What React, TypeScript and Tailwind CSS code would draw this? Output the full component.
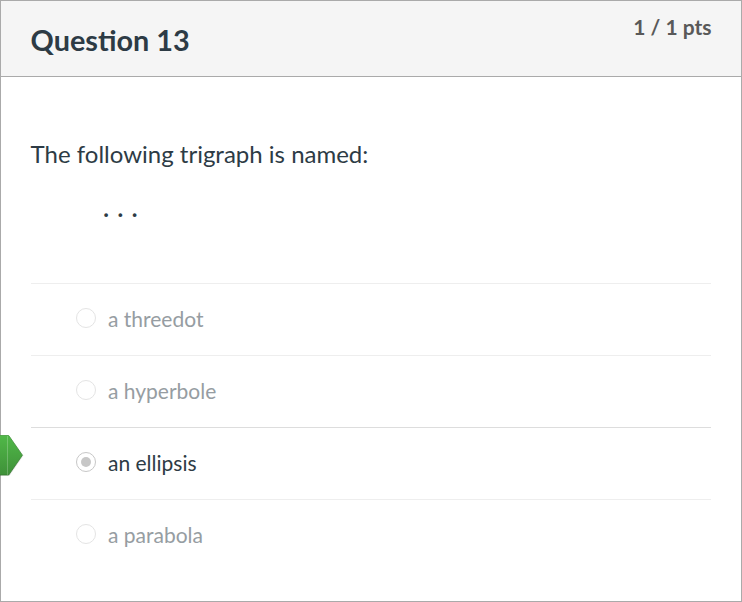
const options = [
  { label: "a threedot", selected: false },
  { label: "a hyperbole", selected: false },
  { label: "an ellipsis", selected: true },
  { label: "a parabola", selected: false },
];

export default function App() {
  return (
    <div className="h-[602px] w-[742px] border border-[#aaaaaa] bg-white font-['Lato',sans-serif] text-[#2d3b45]">
      <header className="flex h-[76px] items-start justify-between border-b border-[#aaaaaa] bg-[#f5f5f5] pr-[29.5px] pl-[29.6px]">
        <h1 className="pt-[19px] text-[28.8px] leading-[40px] font-bold">Question 13</h1>
        <span className="pt-[11px] text-[21px] leading-[30px] font-bold text-[#595959]">1 / 1 pts</span>
      </header>
      <main className="px-[30px] pt-[59px]">
        <p className="-ml-[0.4px] text-[24px] leading-[36px]">The following trigraph is named:</p>
        <p className="mt-[18px] h-[56px] pl-[72.2px] text-[24px] leading-[36px] font-bold tracking-[8.6px]">...</p>
        <ul className="mt-[37px]">
          {options.map(({ label, selected }) => (
            <li
              key={label}
              className={`relative flex h-[72px] items-center border-t pl-[45px] ${selected ? "border-[#dddddd]" : "border-[#eeeeee]"}`}
            >
              {selected && (
                <svg className="absolute top-[7px] left-[-31px]" width="25" height="42" viewBox="0 0 25 42">
                  <defs>
                    <linearGradient id="arrow-fill" x1="0" y1="0" x2="0" y2="1">
                      <stop offset="0" stopColor="#50b848" />
                      <stop offset="1" stopColor="#3f9139" />
                    </linearGradient>
                    <linearGradient id="arrow-edge" x1="0" y1="0" x2="0" y2="1">
                      <stop offset="0" stopColor="#429b3c" />
                      <stop offset="1" stopColor="#35792f" />
                    </linearGradient>
                  </defs>
                  <path d="M0 1h9.5L23.5 20.5 9.5 40.8H0z" fill="#000000" fillOpacity=".12" />
                  <path d="M-1 .5H8.7L22.4 20.2 8.7 40H-1z" fill="url(#arrow-fill)" stroke="url(#arrow-edge)" strokeWidth=".8" />
                  <path d="M7.5 1v39" stroke="#ffffff" strokeOpacity=".22" />
                </svg>
              )}
              <span className={`mb-[3px] flex size-[20px] items-center justify-center rounded-full border ${selected ? "border-[#c7c7c7]" : "border-[#e4e4e4]"}`}>
                {selected && <span className="size-[10px] rounded-full bg-[#c7c7c7]" />}
              </span>
              <span className={`mb-[2px] ml-[12px] text-[21px] leading-[30px] ${selected ? "" : "text-[#969da2]"}`}>{label}</span>
            </li>
          ))}
        </ul>
      </main>
    </div>
  );
}
